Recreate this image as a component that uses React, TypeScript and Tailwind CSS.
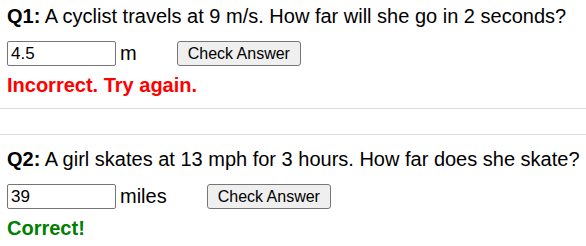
import React from 'react';

interface Question {
  id: string;
  text: string;
  answer: string;
  unit: string;
  feedback: string;
  correct: boolean;
}

const questions: Question[] = [
  {
    id: 'Q1',
    text: 'A cyclist travels at 9 m/s. How far will she go in 2 seconds?',
    answer: '4.5',
    unit: 'm',
    feedback: 'Incorrect. Try again.',
    correct: false,
  },
  {
    id: 'Q2',
    text: 'A girl skates at 13 mph for 3 hours. How far does she skate?',
    answer: '39',
    unit: 'miles',
    feedback: 'Correct!',
    correct: true,
  },
];

const QuestionBlock: React.FC<{ q: Question; first: boolean }> = ({ q, first }) => (
  <div
    className={
      first
        ? 'px-[7px] pt-[5px] pb-[11px] border-b border-[#dddddd]'
        : 'mt-[25px] px-[7px] pt-[13px] pb-[11px] border-t border-[#dddddd]'
    }
  >
    <p className="leading-[23px] whitespace-nowrap">
      <b>{q.id}:</b> {q.text}
    </p>

    <div className="mt-[13px] flex items-center h-[25px]">
      <input
        type="text"
        defaultValue={q.answer}
        className="w-[109px] h-[25px] px-[3px] text-[17px] text-black border border-[#767676] rounded-[2px] bg-white outline-none"
      />
      <span className="ml-[4px] leading-[23px]">{q.unit}</span>
      <button className="ml-[40px] h-[25px] px-[10px] text-base text-black bg-[#efefef] border border-[#767676] rounded-[3px]">
        Check Answer
      </button>
    </div>

    <p
      className={
        q.correct
          ? 'mt-[8px] leading-[23px] font-bold text-[#008000]'
          : 'mt-[8px] leading-[23px] font-bold text-[#ff0000]'
      }
    >
      {q.feedback}
    </p>
  </div>
);

export default function App() {
  return (
    <div className="w-[586px] h-[246px] overflow-hidden bg-white text-black text-[20px] font-['Liberation_Sans',Arial,sans-serif]">
      {questions.map((q, i) => (
        <QuestionBlock key={q.id} q={q} first={i === 0} />
      ))}
    </div>
  );
}
